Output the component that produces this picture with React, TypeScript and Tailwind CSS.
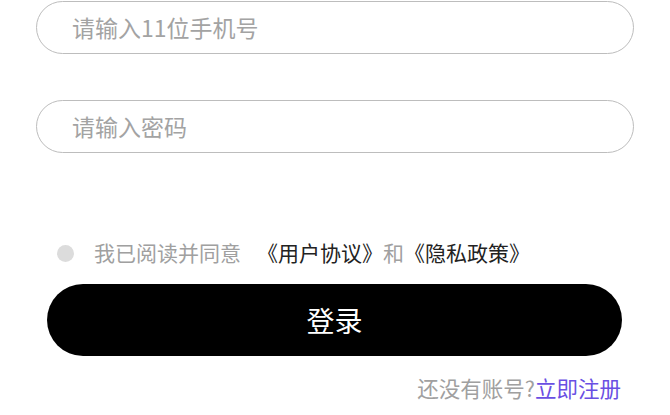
import { useState } from 'react';

export default function App() {
  const [agreed, setAgreed] = useState(false);

  return (
    <div className="w-[670px] h-[415px] bg-white overflow-hidden font-['Noto_Sans_CJK_SC','Noto_Sans',sans-serif] pt-px">
      <div className="px-[36px] flex flex-col gap-[46px]">
        <input
          type="tel"
          placeholder="请输入11位手机号"
          className="h-[53px] w-full rounded-full border border-[#bdbdbd] pl-[35px] pb-[2px] text-[23px] text-[#333] placeholder:text-[#a3a3a3] outline-none"
        />
        <input
          type="password"
          placeholder="请输入密码"
          className="h-[53px] w-full rounded-full border border-[#bdbdbd] pl-[35px] pb-[2px] text-[23px] text-[#333] placeholder:text-[#a3a3a3] outline-none"
        />
      </div>

      <div className="mt-[85px] pl-[57px] flex items-center h-[30px] text-[21px]">
        <button
          type="button"
          onClick={() => setAgreed(!agreed)}
          className={agreed ? 'w-[17px] h-[17px] rounded-full bg-black' : 'w-[17px] h-[17px] rounded-full bg-[#dcdcdc]'}
        />
        <span className="ml-[20px] text-[#a0a0a0]">我已阅读并同意</span>
        <span className="ml-[16px] text-[#222]">《用户协议》</span>
        <span className="text-[#a0a0a0]">和</span>
        <span className="text-[#222]">《隐私政策》</span>
      </div>

      <div className="mt-[16px] pl-[47px] pr-[48px]">
        <button
          type="button"
          className="w-full h-[72px] rounded-full bg-black text-white text-[28px] flex items-center justify-center"
        >
          登录
        </button>
      </div>

      <div className="mt-[17px] pr-[49px] flex justify-end h-[30px] items-center text-[21.5px]">
        <span className="text-[#a0a0a0]">还没有账号?</span>
        <a href="#" className="text-[#6a4fe3]">
          立即注册
        </a>
      </div>
    </div>
  );
}
